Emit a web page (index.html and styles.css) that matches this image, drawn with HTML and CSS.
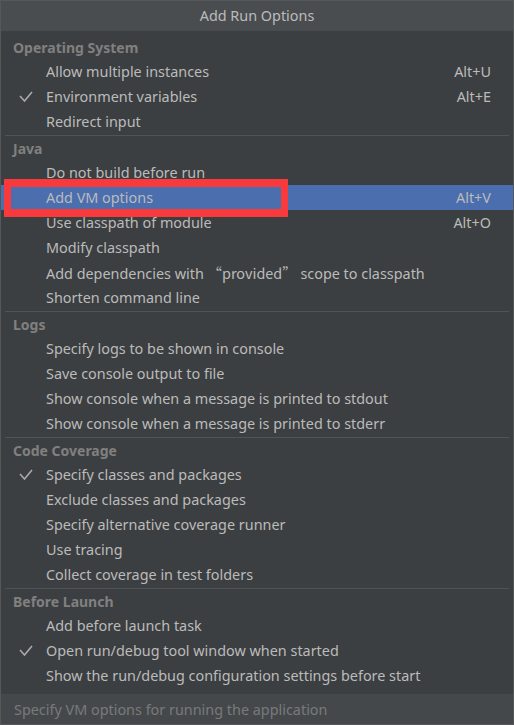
FILE: index.html
```html
<!DOCTYPE html>
<html>
<head>
<meta charset="utf-8">
<link rel="stylesheet" href="styles.css">
</head>
<body>
<div class="window">
  <div class="title">Add Run Options</div>
  <div class="body">
    <div class="section">
      <div class="header">Operating System</div>
      <div class="row"><span class="check"></span><span class="label">Allow multiple instances</span><span class="key">Alt+U</span></div>
      <div class="row"><span class="check"><svg viewBox="0 0 14 11" width="14" height="11"><polyline points="1,5 5.5,10 13,1" fill="none" stroke="#a9a9a9" stroke-width="1.6"/></svg></span><span class="label">Environment variables</span><span class="key">Alt+E</span></div>
      <div class="row"><span class="check"></span><span class="label">Redirect input</span></div>
    </div>
    <div class="sep"></div>
    <div class="section">
      <div class="header">Java</div>
      <div class="row"><span class="check"></span><span class="label">Do not build before run</span></div>
      <div class="row selected"><span class="check"></span><span class="label">Add VM options</span><span class="key">Alt+V</span><span class="mark"></span></div>
      <div class="row"><span class="check"></span><span class="label">Use classpath of module</span><span class="key">Alt+O</span></div>
      <div class="row"><span class="check"></span><span class="label">Modify classpath</span></div>
      <div class="row"><span class="check"></span><span class="label">Add dependencies with <span class="cjk">“provided”</span> scope to classpath</span></div>
      <div class="row"><span class="check"></span><span class="label">Shorten command line</span></div>
    </div>
    <div class="sep"></div>
    <div class="section">
      <div class="header">Logs</div>
      <div class="row"><span class="check"></span><span class="label">Specify logs to be shown in console</span></div>
      <div class="row"><span class="check"></span><span class="label">Save console output to file</span></div>
      <div class="row"><span class="check"></span><span class="label">Show console when a message is printed to stdout</span></div>
      <div class="row"><span class="check"></span><span class="label">Show console when a message is printed to stderr</span></div>
    </div>
    <div class="sep"></div>
    <div class="section">
      <div class="header">Code Coverage</div>
      <div class="row"><span class="check"><svg viewBox="0 0 14 11" width="14" height="11"><polyline points="1,5 5.5,10 13,1" fill="none" stroke="#a9a9a9" stroke-width="1.6"/></svg></span><span class="label">Specify classes and packages</span></div>
      <div class="row"><span class="check"></span><span class="label">Exclude classes and packages</span></div>
      <div class="row"><span class="check"></span><span class="label">Specify alternative coverage runner</span></div>
      <div class="row"><span class="check"></span><span class="label">Use tracing</span></div>
      <div class="row"><span class="check"></span><span class="label">Collect coverage in test folders</span></div>
    </div>
    <div class="sep"></div>
    <div class="section">
      <div class="header">Before Launch</div>
      <div class="row"><span class="check"></span><span class="label">Add before launch task</span></div>
      <div class="row"><span class="check"><svg viewBox="0 0 14 11" width="14" height="11"><polyline points="1,5 5.5,10 13,1" fill="none" stroke="#a9a9a9" stroke-width="1.6"/></svg></span><span class="label">Open run/debug tool window when started</span></div>
      <div class="row"><span class="check"></span><span class="label">Show the run/debug configuration settings before start</span></div>
    </div>
  </div>
  <div class="footer">Specify VM options for running the application</div>
</div>
</body>
</html>
```
FILE: styles.css
```css
html, body {
  margin: 0;
  padding: 0;
  background: #3c3f41;
}
body {
  font-family: "Noto Sans", "Noto Sans CJK SC", sans-serif;
  font-size: 14.4px;
  color: #bbbbbb;
}
.window {
  width: 514px;
  height: 725px;
  box-sizing: border-box;
  border: 1px solid #555759;
  background: #3c3f41;
  display: flex;
  flex-direction: column;
}
.title {
  height: 30px;
  background: #4a4d50;
  color: #bbbbbb;
  display: flex;
  align-items: center;
  justify-content: center;
  line-height: 1;
  flex: none;
}
.body {
  flex: 1;
  padding: 5px 0 5px 0;
}
.header {
  height: 23px;
  display: flex;
  align-items: center;
  padding-left: 12px;
  font-weight: bold;
  font-size: 14px;
  color: #808080;
}
.row {
  position: relative;
  height: 25px;
  display: flex;
  align-items: center;
  white-space: nowrap;
}
.row.selected {
  background: #4b6eaf;
}
.check {
  width: 45px;
  flex: none;
  display: flex;
  align-items: center;
  padding-left: 18px;
  box-sizing: border-box;
}
.check svg {
  display: block;
}
.label {
  flex: 1;
}
.cjk {
  font-family: "Noto Sans CJK SC", sans-serif;
}
.key {
  padding-right: 22px;
}
.mark {
  position: absolute;
  left: 3px;
  top: -6px;
  width: 284px;
  height: 38px;
  box-sizing: border-box;
  border-style: solid;
  border-color: #f83a3c;
  border-width: 8px 7px;
}
.sep {
  height: 3px;
  display: flex;
  align-items: center;
  padding: 0 4px;
}
.sep::before {
  content: "";
  display: block;
  height: 1px;
  flex: 1;
  background: #515456;
}
.footer {
  height: 30px;
  flex: none;
  background: #45484a;
  color: #787a7c;
  display: flex;
  align-items: center;
  padding-left: 13px;
}
```
